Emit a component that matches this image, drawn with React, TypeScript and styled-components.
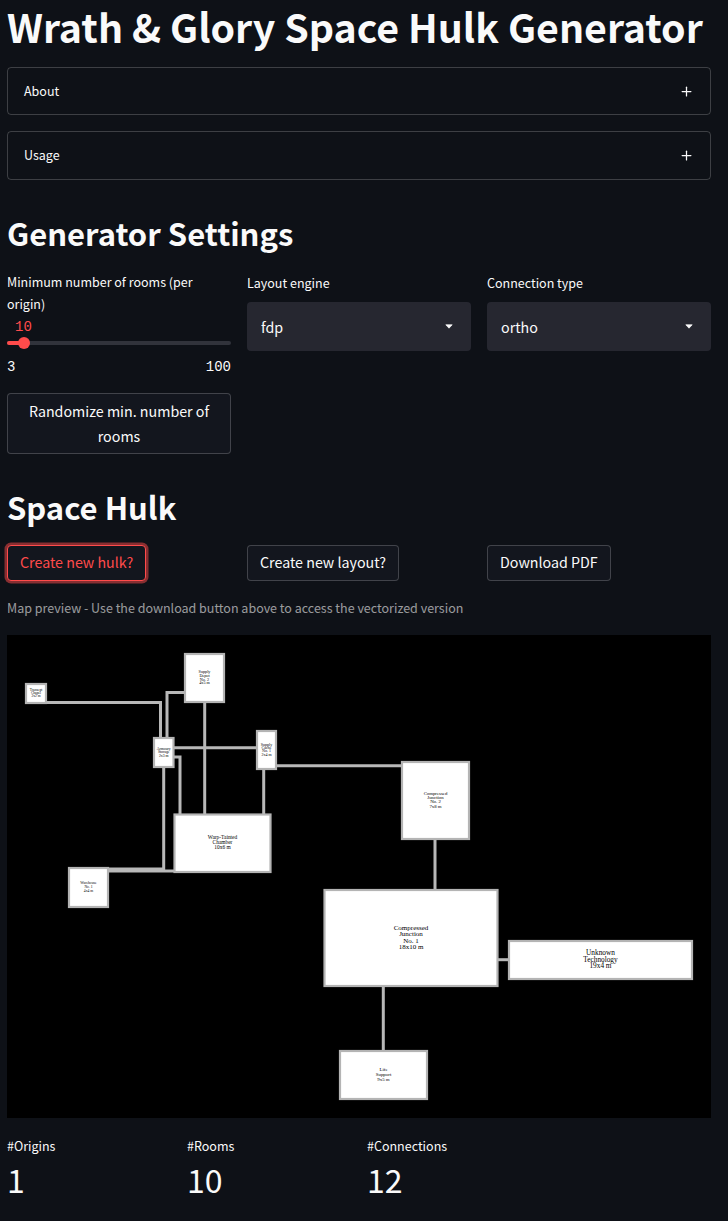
import React from "react";
import styled, { createGlobalStyle } from "styled-components";
import { Plus } from "lucide-react";

const GlobalStyle = createGlobalStyle`
  html, body {
    margin: 0;
    padding: 0;
    background: #0e1117;
    overflow: hidden;
  }
  * {
    box-sizing: border-box;
  }
`;

const Page = styled.main`
  width: 728px;
  height: 1221px;
  padding: 0 17px 0 7px;
  color: #fafafa;
  font-family: "Noto Sans CJK SC", "Noto Sans", sans-serif;
  font-size: 14.25px;
  line-height: 25.6px;
`;

const Title = styled.h1`
  margin: 0 0 16px;
  font-size: 39.3px;
  font-weight: 700;
  line-height: 51px;
  white-space: nowrap;
`;

const SectionTitle = styled.h2`
  margin: 32px 0 18px;
  font-size: 31px;
  font-weight: 600;
  line-height: 41px;
`;

const ExpanderList = styled.div`
  display: flex;
  flex-direction: column;
  gap: 16px;
`;

const Expander = styled.div<{ $tall?: boolean }>`
  display: flex;
  align-items: center;
  justify-content: space-between;
  height: ${(p) => (p.$tall ? 49 : 48)}px;
  padding: 0 16.5px ${(p) => (p.$tall ? 1 : 0)}px 16px;
  border: 1px solid rgba(250, 250, 250, 0.2);
  border-radius: 4px;
  font-size: 12.5px;
`;

const Columns = styled.div`
  display: grid;
  grid-template-columns: repeat(3, 224px);
  column-gap: 16px;
`;

const Field = styled.div`
  display: flex;
  flex-direction: column;
  align-items: stretch;
`;

const ButtonCell = styled.div`
  display: flex;
  align-items: flex-start;
`;

const FieldLabel = styled.label<{ $offset?: number }>`
  display: block;
  margin-top: ${(p) => p.$offset ?? 0}px;
  font-size: 12.5px;
  line-height: 22.4px;
`;

const SliderValue = styled.div`
  padding-left: 8px;
  color: #ff4b4b;
  font-family: "Liberation Mono", monospace;
  font-size: 14px;
  line-height: 22px;
`;

const SliderTrack = styled.div`
  position: relative;
  height: 4px;
  margin-top: 3px;
  border-radius: 2px;
  background: #31333b;
`;

const SliderFill = styled.div`
  height: 100%;
  border-radius: 2px;
  background: #ff4b4b;
`;

const SliderThumb = styled.span`
  position: absolute;
  top: -4px;
  width: 12px;
  height: 12px;
  margin-left: -6px;
  border-radius: 50%;
  background: #ff4b4b;
`;

const SliderRange = styled.div`
  display: flex;
  justify-content: space-between;
  margin-top: 11px;
  font-family: "Liberation Mono", monospace;
  font-size: 14px;
  line-height: 22px;
`;

const Select = styled.div`
  display: flex;
  align-items: center;
  justify-content: space-between;
  height: 49px;
  margin-top: 8px;
  padding: 0 18px 0 14px;
  border-radius: 4px;
  background: #262730;
`;

const Button = styled.button<{ $active?: boolean; $wide?: boolean }>`
  display: block;
  width: ${(p) => (p.$wide ? "100%" : "auto")};
  padding: ${(p) => (p.$wide ? "4px 12px" : "3px 12px 5px")};
  border: 1px solid ${(p) => (p.$active ? "#ff4b4b" : "rgba(250, 250, 250, 0.2)")};
  border-radius: 4px;
  background: #13161e;
  box-shadow: ${(p) => (p.$active ? "0 0 0 2.5px rgba(255, 75, 75, 0.5)" : "none")};
  color: ${(p) => (p.$active ? "#ff4b4b" : "#fafafa")};
  font: inherit;
  text-align: center;
`;

const RandomizeRow = styled.div`
  width: 224px;
  margin-top: 15px;
`;

const Caption = styled.p`
  margin: 16px 0;
  color: rgba(250, 250, 250, 0.6);
  font-size: 12.5px;
  line-height: 22.4px;
`;

const MapFrame = styled.svg`
  display: block;
  width: 704px;
  height: 483px;
  background: #000;
`;

const Edge = styled.path`
  fill: none;
  stroke: #b8b8b8;
  stroke-width: 3;
`;

const RoomBox = styled.rect`
  fill: #fff;
  stroke: #b4b4b4;
  stroke-width: 2.2;
`;

const RoomLabel = styled.text`
  fill: #000;
  font-family: "Liberation Serif", serif;
  text-anchor: middle;
`;

const Metrics = styled.div`
  display: grid;
  grid-template-columns: repeat(3, 164px);
  column-gap: 16px;
  margin-top: 17px;
`;

const MetricLabel = styled.div`
  font-size: 12.5px;
  line-height: 22px;
`;

const MetricValue = styled.div`
  margin-top: 1px;
  font-size: 32px;
  line-height: 43px;
`;

function Caret() {
  return (
    <svg width="8" height="5" viewBox="0 0 8 5" aria-hidden="true">
      <path d="M.8.8h6.4L4 4.2z" fill="#fafafa" stroke="#fafafa" strokeWidth="0.7" strokeLinejoin="round" />
    </svg>
  );
}

// coordinates are page pixels, the viewBox below takes care of the offset
const edges = [
  "M46 702.5H160.5V737",
  "M185 692.5H167V737",
  "M204.7 702V814",
  "M174 747.7H256",
  "M174 757H180V814",
  "M163.7 767V869H108",
  "M108 871H174",
  "M263.7 769V814",
  "M277 765.7H401",
  "M435 839V889",
  "M498 959.7H508",
  "M383.3 986V1050",
];

interface Room {
  x: number;
  y: number;
  w: number;
  h: number;
  size: number;
  step: number;
  lines: string[];
}

const rooms: Room[] = [
  { x: 26, y: 684, w: 20, h: 19, size: 3.6, step: 3.2, lines: ["Transept", "Chapel", "2x2 m"] },
  { x: 185, y: 654, w: 39, h: 48, size: 4.2, step: 3.8, lines: ["Supply", "Depot", "No. 2", "4x5 m"] },
  { x: 154, y: 738, w: 19.5, h: 29, size: 3.8, step: 3.4, lines: ["Armoury", "Storage", "2x3 m"] },
  { x: 257, y: 731, w: 19, h: 38, size: 4, step: 3.4, lines: ["Supply", "Cache", "No. 1", "2x4 m"] },
  { x: 174.5, y: 814.5, w: 96, h: 57.5, size: 5.4, step: 4.9, lines: ["Warp-Tainted", "Chamber", "10x6 m"] },
  { x: 69, y: 868, w: 39, h: 39, size: 3.7, step: 3.8, lines: ["Warehouse", "No. 1", "4x4 m"] },
  { x: 402, y: 762, w: 67, h: 77, size: 4.8, step: 4.1, lines: ["Compressed", "Junction", "No. 2", "7x8 m"] },
  { x: 324.5, y: 890, w: 173, h: 96, size: 7, step: 6.4, lines: ["Compressed", "Junction", "No. 1", "18x10 m"] },
  { x: 509, y: 941, w: 183, h: 38, size: 7.3, step: 6.6, lines: ["Unknown", "Technology", "19x4 m"] },
  { x: 340, y: 1051, w: 87, h: 48, size: 4.9, step: 4.8, lines: ["Life", "Support", "9x5 m"] },
];

function RoomNode({ room }: { room: Room }) {
  const cx = room.x + room.w / 2;
  const first = room.y + room.h / 2 - ((room.lines.length - 1) * room.step) / 2 + room.size * 0.3 - 0.5;

  return (
    <g>
      <RoomBox x={room.x} y={room.y} width={room.w} height={room.h} />
      {room.lines.map((line, i) => (
        <RoomLabel key={line} x={cx} y={first + i * room.step} fontSize={room.size}>
          {line}
        </RoomLabel>
      ))}
    </g>
  );
}

const metrics = [
  { label: "#Origins", value: 1 },
  { label: "#Rooms", value: 10 },
  { label: "#Connections", value: 12 },
];

export default function App() {
  return (
    <Page>
      <GlobalStyle />
      <Title>Wrath &amp; Glory Space Hulk Generator</Title>

      <ExpanderList>
        <Expander>
          About
          <Plus size={15} strokeWidth={2} />
        </Expander>
        <Expander $tall>
          Usage
          <Plus size={15} strokeWidth={2} />
        </Expander>
      </ExpanderList>

      <SectionTitle>Generator Settings</SectionTitle>

      <Columns>
        <Field>
          <FieldLabel>Minimum number of rooms (per origin)</FieldLabel>
          <SliderValue>10</SliderValue>
          <SliderTrack>
            <SliderFill style={{ width: "16px" }} />
            <SliderThumb style={{ left: "16.5px" }} />
          </SliderTrack>
          <SliderRange>
            <span>3</span>
            <span>100</span>
          </SliderRange>
          <RandomizeRow>
            <Button $wide>Randomize min. number of rooms</Button>
          </RandomizeRow>
        </Field>
        <Field>
          <FieldLabel $offset={1}>Layout engine</FieldLabel>
          <Select>
            fdp
            <Caret />
          </Select>
        </Field>
        <Field>
          <FieldLabel $offset={1}>Connection type</FieldLabel>
          <Select>
            ortho
            <Caret />
          </Select>
        </Field>
      </Columns>

      <SectionTitle>Space Hulk</SectionTitle>

      <Columns>
        <ButtonCell>
          <Button $active>Create new hulk?</Button>
        </ButtonCell>
        <ButtonCell>
          <Button>Create new layout?</Button>
        </ButtonCell>
        <ButtonCell>
          <Button>Download PDF</Button>
        </ButtonCell>
      </Columns>

      <Caption>Map preview - Use the download button above to access the vectorized version</Caption>

      <MapFrame viewBox="7 635 704 483">
        {edges.map((d) => (
          <Edge key={d} d={d} />
        ))}
        {rooms.map((room) => (
          <RoomNode key={room.lines.join(" ")} room={room} />
        ))}
      </MapFrame>

      <Metrics>
        {metrics.map((metric) => (
          <div key={metric.label}>
            <MetricLabel>{metric.label}</MetricLabel>
            <MetricValue>{metric.value}</MetricValue>
          </div>
        ))}
      </Metrics>
    </Page>
  );
}
